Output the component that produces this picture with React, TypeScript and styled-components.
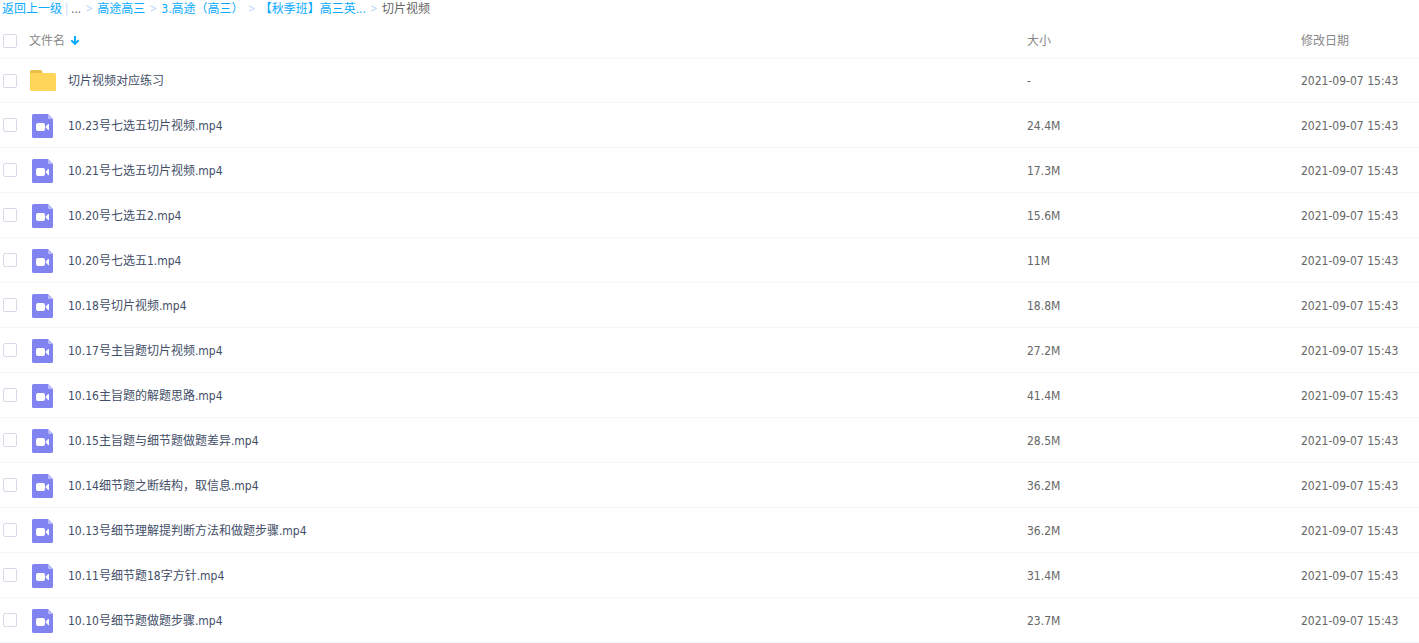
import React, { Fragment } from 'react';
import styled, { createGlobalStyle } from 'styled-components';

const GlobalStyle = createGlobalStyle`
  *, *::before, *::after {
    box-sizing: border-box;
  }
  body {
    margin: 0;
    background: #fff;
    color: #666;
    font-family: 'DejaVu Sans Condensed', 'Noto Sans CJK SC', sans-serif;
    font-size: 12px;
    line-height: 18px;
  }
`;

const Breadcrumb = styled.nav`
  display: flex;
  align-items: center;
  height: 24px;
  padding: 0 2px 6px;
  white-space: nowrap;
`;

const Crumb = styled.a`
  color: #09aaff;
  text-decoration: none;
  &:hover {
    text-decoration: underline;
  }
`;

const Divider = styled.span`
  width: 9px;
  color: #c4dbfe;
  text-align: center;
`;

const Arrow = styled.span`
  width: 16px;
  color: #b4cffa;
  font-family: 'Noto Sans', sans-serif;
  text-align: center;
`;

const FileTable = styled.table`
  width: 100%;
  table-layout: fixed;
  border-collapse: separate;
  border-spacing: 0;
`;

const Column = styled.col<{ $width?: number }>`
  width: ${(p) => (p.$width ? `${p.$width}px` : 'auto')};
`;

const HeadCell = styled.th`
  height: 34px;
  padding: 0;
  color: #888;
  font-weight: 400;
  text-align: left;
  vertical-align: middle;
`;

const Row = styled.tr`
  &:first-child > td {
    border-top: 1px solid #f2f6fd;
  }
  &:hover {
    background: #f8fbff;
  }
`;

const Cell = styled.td`
  height: 45px;
  padding: 0;
  border-bottom: 1px solid #f2f6fd;
  vertical-align: middle;
`;

const TextCell = styled(Cell)`
  padding-top: 1px;
`;

const Tick = styled.input`
  appearance: none;
  display: block;
  width: 14px;
  height: 14px;
  margin: 0 0 0 3px;
  border: 1px solid #d4dae6;
  border-radius: 2px;
  background: #fff;
  &:checked {
    border-color: #09aaff;
    background: #09aaff;
  }
`;

const SortButton = styled.button`
  display: flex;
  align-items: center;
  gap: 5px;
  padding: 0;
  border: 0;
  background: none;
  color: inherit;
  font: inherit;
  cursor: pointer;
`;

const NameBox = styled.div`
  display: flex;
  align-items: center;
  gap: 12px;
  padding-left: 1px;
`;

const FileLink = styled.a`
  overflow: hidden;
  padding-top: 1px;
  color: #424e67;
  text-decoration: none;
  text-overflow: ellipsis;
  white-space: nowrap;
  &:hover {
    color: #09aaff;
  }
`;

const Icon = styled.svg`
  display: block;
  flex: none;
`;

const FolderIcon = () => (
  <Icon width="26" height="26" viewBox="0 0 26 26" aria-hidden="true">
    <path d="M0 8V3.500A1.500 1.500 0 0 1 1.500 2h9a1.500 1.500 0 0 1 1.400 1L12.500 5v3z" fill="#ecbf47" />
    <path d="M0 5h24.500A1.500 1.500 0 0 1 26 6.500v15a1.500 1.500 0 0 1-1.500 1.500h-23A1.500 1.500 0 0 1 0 21.500z" fill="#ffd659" />
  </Icon>
);

const VideoIcon = () => (
  <Icon width="26" height="26" viewBox="0 0 26 26" aria-hidden="true">
    <path d="M3.500 2H18l5 5v17.500a1.500 1.500 0 0 1-1.500 1.500h-18A1.500 1.500 0 0 1 2 24.500v-21A1.500 1.500 0 0 1 3.500 2z" fill="#8184f0" />
    <path d="M18 2l5 5h-4a1 1 0 0 1-1-1z" fill="#b9bbfa" />
    <rect x="6" y="11" width="9" height="8" rx="2" fill="#fff" />
    <path d="M15.400 15l2.700-2.900q.9-.6.9.4v5q0 1-.9.400z" fill="#fff" />
  </Icon>
);

const DownIcon = () => (
  <Icon width="10" height="10" viewBox="0 0 10 10" aria-hidden="true">
    <path d="M5 0v7M1.300 4.200L5 7.900l3.700-3.700" fill="none" stroke="#09aaff" strokeWidth="2" />
  </Icon>
);

const crumbs = ['高途高三', '3.高途（高三）', '【秋季班】高三英...'];

type Entry = { name: string; size: string; folder?: boolean };

const entries: Entry[] = [
  { name: '切片视频对应练习', size: '-', folder: true },
  { name: '10.23号七选五切片视频.mp4', size: '24.4M' },
  { name: '10.21号七选五切片视频.mp4', size: '17.3M' },
  { name: '10.20号七选五2.mp4', size: '15.6M' },
  { name: '10.20号七选五1.mp4', size: '11M' },
  { name: '10.18号切片视频.mp4', size: '18.8M' },
  { name: '10.17号主旨题切片视频.mp4', size: '27.2M' },
  { name: '10.16主旨题的解题思路.mp4', size: '41.4M' },
  { name: '10.15主旨题与细节题做题差异.mp4', size: '28.5M' },
  { name: '10.14细节题之断结构，取信息.mp4', size: '36.2M' },
  { name: '10.13号细节理解提判断方法和做题步骤.mp4', size: '36.2M' },
  { name: '10.11号细节题18字方针.mp4', size: '31.4M' },
  { name: '10.10号细节题做题步骤.mp4', size: '23.7M' },
];

const modified = '2021-09-07 15:43';

export default function App() {
  return (
    <main lang="zh-CN">
      <GlobalStyle />
      <Breadcrumb>
        <Crumb href="#up">返回上一级</Crumb>
        <Divider>|</Divider>
        <span>...</span>
        {crumbs.map((crumb) => (
          <Fragment key={crumb}>
            <Arrow>&gt;</Arrow>
            <Crumb href="#folder">{crumb}</Crumb>
          </Fragment>
        ))}
        <Arrow>&gt;</Arrow>
        <span>切片视频</span>
      </Breadcrumb>
      <FileTable>
        <colgroup>
          <Column $width={29} />
          <Column />
          <Column $width={274} />
          <Column $width={118} />
        </colgroup>
        <thead>
          <tr>
            <HeadCell>
              <Tick type="checkbox" aria-label="全选" />
            </HeadCell>
            <HeadCell>
              <SortButton type="button">
                文件名
                <DownIcon />
              </SortButton>
            </HeadCell>
            <HeadCell>大小</HeadCell>
            <HeadCell>修改日期</HeadCell>
          </tr>
        </thead>
        <tbody>
          {entries.map((entry) => (
            <Row key={entry.name}>
              <Cell>
                <Tick type="checkbox" aria-label={entry.name} />
              </Cell>
              <Cell>
                <NameBox>
                  {entry.folder ? <FolderIcon /> : <VideoIcon />}
                  <FileLink href="#file">{entry.name}</FileLink>
                </NameBox>
              </Cell>
              <TextCell>{entry.size}</TextCell>
              <TextCell>{modified}</TextCell>
            </Row>
          ))}
        </tbody>
      </FileTable>
    </main>
  );
}
